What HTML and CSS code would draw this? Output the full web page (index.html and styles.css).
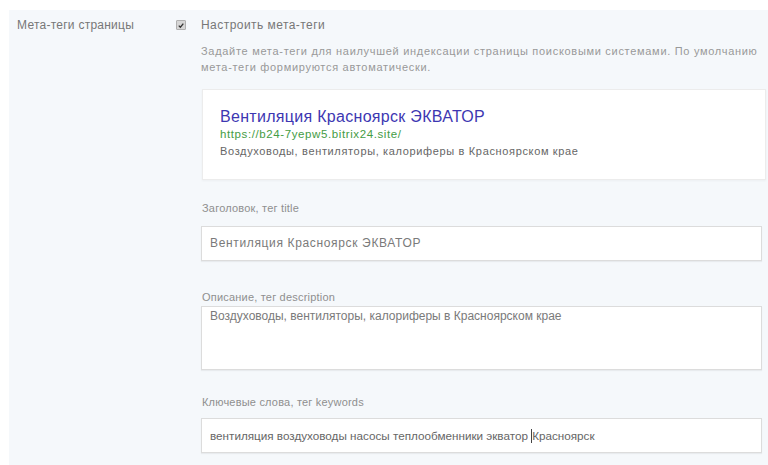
FILE: index.html
```html
<!DOCTYPE html>
<html lang="ru">
<head>
<meta charset="utf-8">
<title>Мета-теги страницы</title>
<link rel="stylesheet" href="styles.css">
</head>
<body>
<div class="panel">
  <div class="row">
    <div class="row-label">Мета-теги страницы</div>
    <div class="row-body">
      <label class="check">
        <span class="check-box">
          <svg viewBox="0 0 10 10" width="10" height="10"><path d="M2.2 5.2 L4.2 7.2 L7.9 2.6" fill="none" stroke="#333" stroke-width="1.6"/></svg>
        </span>
        <span class="check-text">Настроить мета-теги</span>
      </label>
      <div class="content">
        <p class="hint">Задайте мета-теги для наилучшей индексации страницы поисковыми системами. По умолчанию мета-теги формируются автоматически.</p>
        <div class="preview">
          <div class="preview-title">Вентиляция Красноярск ЭКВАТОР</div>
          <div class="preview-url">https://b24-7yepw5.bitrix24.site/</div>
          <div class="preview-desc">Воздуховоды, вентиляторы, калориферы в Красноярском крае</div>
        </div>
        <div class="field f-title">
          <div class="field-label">Заголовок, тег title</div>
          <div class="input">Вентиляция Красноярск ЭКВАТОР</div>
        </div>
        <div class="field f-desc">
          <div class="field-label">Описание, тег description</div>
          <div class="input textarea">Воздуховоды, вентиляторы, калориферы в Красноярском крае</div>
        </div>
        <div class="field f-keys">
          <div class="field-label">Ключевые слова, тег keywords</div>
          <div class="input keys">вентиляция воздуховоды насосы теплообменники экватор <span class="caret"></span>Красноярск</div>
        </div>
      </div>
    </div>
  </div>
</div>
</body>
</html>
```

FILE: styles.css
```css
* { box-sizing: border-box; }

html, body {
  margin: 0;
  background: #ffffff;
}

body {
  padding: 10px 0 0 9px;
  font-family: "Liberation Sans", Arial, sans-serif;
  color: #777;
  height: 465px;
  overflow: hidden;
}

.panel {
  background: #f5f8fb;
  min-height: 455px;
  padding: 7px 2px 0 8px;
}

.row {
  display: grid;
  grid-template-columns: 159px 1fr;
}

.row-label {
  font-size: 12px;
  line-height: 16px;
  letter-spacing: 0.25px;
  color: #777;
}

.check {
  display: flex;
  align-items: center;
  gap: 15px;
  height: 16px;
}

.check-box {
  width: 10px;
  height: 10px;
  background: #d6d6d6;
  border: 1px solid #b0b0b0;
  border-radius: 1px;
  display: flex;
  align-items: center;
  justify-content: center;
}

.check-box svg { display: block; width: 9px; height: 9px; }

.check-text {
  font-size: 12px;
  line-height: 16px;
  letter-spacing: 0.45px;
  color: #777;
}

.content {
  padding-left: 25px;
}

.hint {
  margin: 10px 0 0;
  font-size: 11px;
  line-height: 16px;
  letter-spacing: 0.7px;
  color: #999;
  padding-right: 8px;
}

.preview {
  margin: 14px 0 0 1px;
  background: #fff;
  border: 1px solid #ececec;
  box-shadow: 0 1px 2px rgba(0, 0, 0, 0.04);
  padding: 18px 17px 18px;
  height: 91px;
}

.preview-title {
  font-size: 16px;
  line-height: 18px;
  letter-spacing: 0.3px;
  color: #3d37b2;
}

.preview-url {
  font-size: 11.5px;
  line-height: 17px;
  letter-spacing: 0.6px;
  color: #449c44;
}

.preview-desc {
  font-size: 11px;
  line-height: 17px;
  letter-spacing: 0.65px;
  color: #666;
}

.field-label {
  font-size: 11px;
  line-height: 16px;
  letter-spacing: 0.2px;
  color: #8f8f8f;
  padding-left: 1px;
}

.f-title { margin-top: 20px; }
.f-desc { margin-top: 28px; }
.f-keys { margin-top: 24px; }

.input {
  margin-top: 10px;
  width: 561px;
  height: 35px;
  background: #fff;
  border: 1px solid #dcdcdc;
  box-shadow: 0 1px 1px rgba(0, 0, 0, 0.05);
  padding: 0 8px;
  font-size: 12px;
  line-height: 33px;
  letter-spacing: 0.65px;
  color: #7a7a7a;
  white-space: nowrap;
}

.f-desc .input { margin-top: 1px; }
.f-keys .input { margin-top: 8px; }

.textarea {
  height: 64px;
  line-height: 14px;
  padding-top: 2px;
  letter-spacing: 0;
  white-space: normal;
}

.keys {
  font-size: 11.7px;
  letter-spacing: 0;
  color: #666;
}

.caret {
  display: inline-block;
  width: 1px;
  height: 14px;
  background: #444;
  vertical-align: -3px;
}
```
